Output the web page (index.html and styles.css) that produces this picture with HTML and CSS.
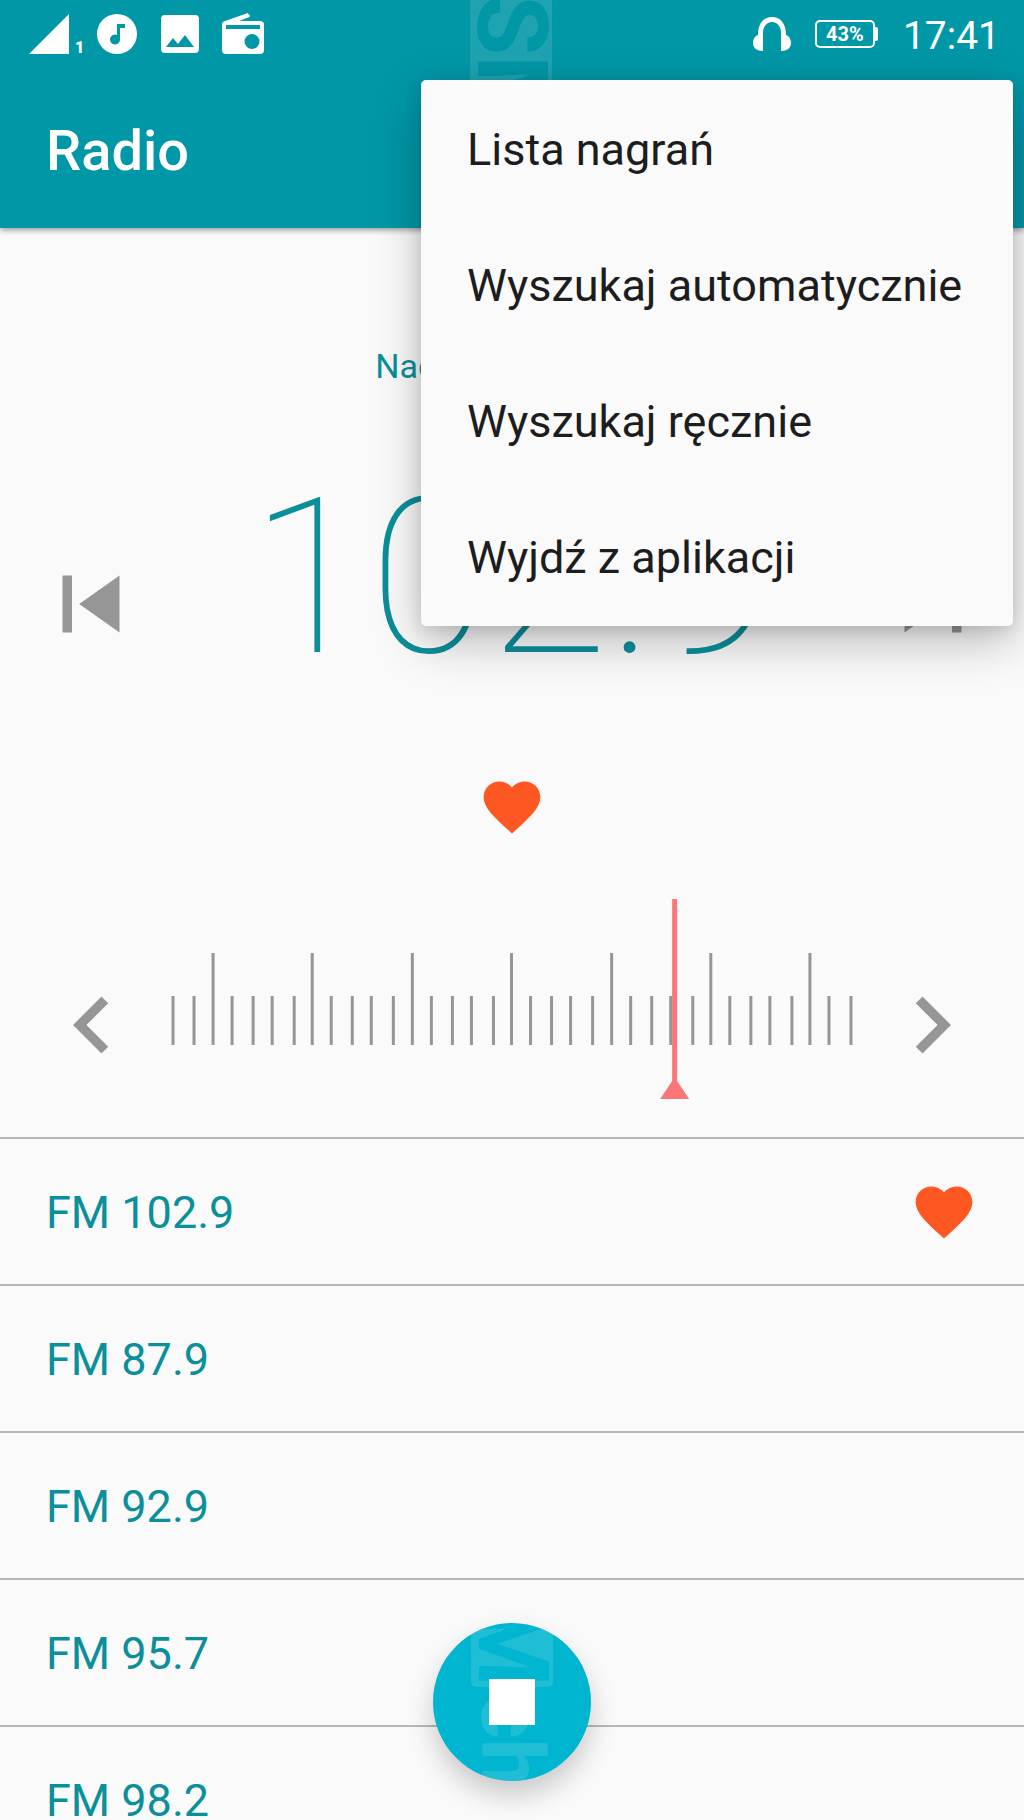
FILE: index.html
```
<!DOCTYPE html>
<html lang="pl">

<head>
  <meta charset="UTF-8" />
  <meta name="viewport" content="width=device-width, initial-scale=1.0" />
  <title>Radio</title>
  <link rel="stylesheet" href="styles.css">
</head>

<body>
  <div class="app">
    <header class="header">
      <div class="stamp stamp-top" aria-hidden="true">SM</div>
      <div class="status-bar">
        <div class="status-left">
          <svg class="signal" width="40" height="40" viewBox="0 0 40 40"><path d="M0 40L40 0v40z" /></svg>
          <span class="sim">1</span>
          <svg class="music" width="40" height="40" viewBox="0 0 40 40">
            <path fill-rule="evenodd" d="M20 0a20 20 0 1 0 0 40a20 20 0 1 0 0-40zM20 10h8v4h-5v11.500a5 5 0 1 1-3-4.600z" />
          </svg>
          <svg class="photo" width="38" height="38" viewBox="0 0 38 38">
            <path fill-rule="evenodd" d="M4 0h30a4 4 0 0 1 4 4v30a4 4 0 0 1-4 4H4a4 4 0 0 1-4-4V4a4 4 0 0 1 4-4zM5 32h28l-9-12-7 9-5-6z" />
          </svg>
          <svg class="fm" width="42" height="42" viewBox="0 0 42 42">
            <path fill-rule="evenodd" d="M26 1a2 2 0 0 1 1.500 3L17 8h21a4 4 0 0 1 4 4v25a4 4 0 0 1-4 4H4a4 4 0 0 1-4-4V12a4 4 0 0 1 3-4L26 0zM4 12v4h34v-4zM30 21a7.500 7.500 0 1 0 0 15a7.500 7.500 0 1 0 0-15z" />
          </svg>
        </div>
        <div class="status-right">
          <svg class="headphones" width="38" height="34" viewBox="0 0 38 34">
            <path d="M0 26c0-4 2-7 5-8C5 7 10 0 19 0s14 7 14 18c3 1 5 4 5 8 0 5-4 8-10 8V16c0-7-4-11-9-11s-9 4-9 11v18C4 34 0 31 0 26z" />
          </svg>
          <span class="battery">43%</span>
          <time>17:41</time>
        </div>
      </div>
      <h1 class="title">Radio</h1>
      <nav class="menu">
        <button type="button">Lista nagrań</button>
        <button type="button">Wyszukaj automatycznie</button>
        <button type="button">Wyszukaj ręcznie</button>
        <button type="button">Wyjdź z aplikacji</button>
      </nav>
    </header>

    <main class="player">
      <p class="state">Nadawanie fal FM</p>
      <div class="station">
        <button type="button" class="icon-btn" aria-label="Poprzednia stacja">
          <svg width="114" height="114" viewBox="0 0 24 24"><path d="M6 6h2v12H6zm3.500 6l8.500 6V6z" /></svg>
        </button>
        <span class="frequency">102.9</span>
        <button type="button" class="icon-btn" aria-label="Następna stacja">
          <svg width="114" height="114" viewBox="0 0 24 24"><path d="M6 18l8.500-6L6 6v12zM16 6v12h2V6z" /></svg>
        </button>
      </div>
      <button type="button" class="icon-btn heart favorite" aria-label="Ulubiona">
        <svg width="68" height="68" viewBox="0 0 24 24"><path d="M12 21.350l-1.450-1.320C5.400 15.360 2 12.280 2 8.500 2 5.420 4.420 3 7.500 3c1.740 0 3.410.810 4.500 2.090C13.090 3.810 14.760 3 16.500 3 19.580 3 22 5.420 22 8.500c0 3.780-3.400 6.860-8.550 11.540z" /></svg>
      </button>
      <div class="tuner">
        <button type="button" class="icon-btn step" aria-label="W dół">
          <svg width="114" height="114" viewBox="0 0 24 24"><path d="M15.410 7.410L14 6l-6 6 6 6 1.410-1.410L10.830 12z" /></svg>
        </button>
        <div class="scale">
          <svg class="ticks" viewBox="0 0 681 92" preserveAspectRatio="none">
            <!-- long ticks -->
            <path d="M42 0v92M141 0v92M241 0v92M340 0v92M440 0v92M539 0v92M638 0v92" />
            <!-- short ticks -->
            <path d="M2 43v49M23 43v49M61 43v49M82 43v49M101 43v49M123 43v49M160 43v49M181 43v49M200 43v49M222 43v49M260 43v49M281 43v49M300 43v49M322 43v49M359 43v49M380 43v49M399 43v49M421 43v49M459 43v49M480 43v49M499 43v49M521 43v49M558 43v49M579 43v49M598 43v49M620 43v49M657 43v49M679 43v49" />
          </svg>
          <input type="range" class="needle" min="87" max="108.5" step="0.1" value="102.9" aria-label="Częstotliwość">
        </div>
        <button type="button" class="icon-btn step" aria-label="W górę">
          <svg width="114" height="114" viewBox="0 0 24 24"><path d="M10 6L8.590 7.410 13.170 12l-4.580 4.590L10 18l6-6z" /></svg>
        </button>
      </div>
    </main>

    <ul class="stations">
      <li>
        <a href="#">FM 102.9</a>
        <button type="button" class="icon-btn heart" aria-label="Ulubiona">
          <svg width="68" height="68" viewBox="0 0 24 24"><path d="M12 21.350l-1.450-1.320C5.400 15.360 2 12.280 2 8.500 2 5.420 4.420 3 7.500 3c1.740 0 3.410.810 4.500 2.090C13.090 3.810 14.760 3 16.500 3 19.580 3 22 5.420 22 8.500c0 3.780-3.400 6.860-8.550 11.540z" /></svg>
        </button>
      </li>
      <li><a href="#">FM 87.9</a></li>
      <li><a href="#">FM 92.9</a></li>
      <li><a href="#">FM 95.7</a></li>
      <li><a href="#">FM 98.2</a></li>
    </ul>

    <button type="button" class="stop" aria-label="Stop">
      <span class="stop-stamp" aria-hidden="true"><span class="stamp stamp-box">M</span>ch</span>
      <svg width="46" height="46" viewBox="0 0 46 46"><path d="M0 0h46v46H0z" /></svg>
    </button>
  </div>
</body>

</html>
```
FILE: styles.css
```
* {
  box-sizing: border-box;
}

body {
  margin: 0;
  background-color: #fafafa;
  color: #0b8f9b;
  font-family: Roboto, "Noto Sans", sans-serif;
}

button {
  margin: 0;
  padding: 0;
  border: 0;
  background: none;
  font: inherit;
  cursor: pointer;
}

svg {
  display: block;
  fill: currentColor;
}

.app {
  position: relative;
  display: flex;
  flex-direction: column;
  height: 100vh;
  overflow: hidden;
}

/* Header */
.header {
  position: relative;
  z-index: 1;
  height: 228px;
  flex: none;
  background-color: #0097a7;
  color: #fff;
  box-shadow: 0 2px 6px rgba(0, 0, 0, 0.4);
}

.status-bar {
  display: flex;
  justify-content: space-between;
  height: 68px;
  padding: 0 24px 0 29px;
}

.status-left,
.status-right {
  display: flex;
  align-items: center;
}

.sim {
  align-self: flex-end;
  width: 10px;
  margin: 0 12px 10px 6px;
  font-size: 16px;
  font-weight: 900;
  line-height: 20px;
}

.music {
  margin-right: 24px;
}

.photo {
  margin-right: 23px;
}

.battery {
  position: relative;
  width: 60px;
  height: 28px;
  margin: 0 28px 0 24px;
  border: 2px solid #fff;
  border-radius: 5px;
  font-size: 20px;
  font-weight: 700;
  line-height: 25px;
  text-align: center;
}

.battery::after {
  content: "";
  position: absolute;
  top: 5px;
  right: -5px;
  width: 4px;
  height: 14px;
  border-radius: 0 2px 2px 0;
  background-color: #fff;
}

.status-right time {
  padding-top: 3px;
  font-size: 39px;
  line-height: 44px;
}

.title {
  margin: 0;
  padding: 0 46px;
  font-size: 56px;
  font-weight: 500;
  line-height: 166px;
}

.menu {
  position: absolute;
  top: 80px;
  right: 11px;
  display: flex;
  flex-direction: column;
  width: 592px;
  padding: 2px 0 0;
  border-radius: 5px;
  background-color: #fafafa;
  box-shadow: 0 16px 48px rgba(0, 0, 0, 0.25), 0 4px 16px rgba(0, 0, 0, 0.12);
}

.menu button {
  padding: 0 46px;
  color: #1d1d1d;
  font-size: 45px;
  line-height: 136px;
  text-align: left;
}

/* Vertical letters in a pale frame */
.stamp {
  width: 82px;
  background-color: rgba(255, 255, 255, 0.12);
  font-size: 98px;
  font-weight: 700;
  line-height: 82px;
  writing-mode: vertical-rl;
}

.stamp-top {
  position: absolute;
  top: 0;
  left: calc(50% - 42px);
  height: 80px;
  overflow: hidden;
  color: #0097a7;
  text-indent: -5px;
}

/* Player */
.player {
  padding: 118px 34px 38px;
}

.state {
  margin: 0;
  font-size: 34px;
  line-height: 40px;
  text-align: center;
}

.icon-btn {
  color: #969696;
}

.station {
  display: flex;
  align-items: flex-end;
  justify-content: space-between;
  margin-top: 109px;
}

.frequency {
  font-size: 218px;
  font-weight: 100;
  line-height: 166px;
}

.heart {
  color: #ff5722;
}

.favorite {
  display: block;
  margin: 112px auto 58px;
}

.tuner {
  display: flex;
  align-items: flex-end;
  padding: 0 1px;
}

.step {
  margin-bottom: 17px;
}

.scale {
  display: grid;
  flex: 1;
  margin: 0 9px;
}

.ticks,
.needle {
  grid-area: 1 / 1;
}

.ticks {
  width: calc(100% - 26px);
  height: 92px;
  margin: 54px 13px 0;
  fill: none;
  stroke: #969696;
  stroke-width: 3;
}

.needle {
  width: 100%;
  height: 200px;
  margin: 0;
  background: none;
  -webkit-appearance: none;
  appearance: none;
}

.needle::-webkit-slider-thumb {
  width: 29px;
  height: 200px;
  background-color: #fb7678;
  clip-path: polygon(12px 0, 17px 0, 17px 182px, 29px 200px, 0 200px, 12px 182px);
  -webkit-appearance: none;
}

/* Station list */
.stations {
  flex: 1;
  margin: 0;
  padding: 0;
  overflow: hidden;
  list-style: none;
}

.stations li {
  display: flex;
  align-items: center;
  justify-content: space-between;
  height: 147px;
  padding: 0 46px;
  border-top: 2px solid #b8b8b8;
}

.stations a {
  padding-top: 3px;
  color: inherit;
  font-size: 45px;
  line-height: 56px;
  text-decoration: none;
}

/* Stop button */
.stop {
  position: absolute;
  bottom: 39px;
  left: calc(50% - 79px);
  display: grid;
  place-items: center;
  width: 158px;
  height: 158px;
  border-radius: 50%;
  background-color: #00b5cf;
  color: #fff;
  box-shadow: 0 14px 28px rgba(0, 0, 0, 0.2);
}

.stop svg,
.stop-stamp {
  grid-area: 1 / 1;
}

.stop svg {
  position: relative;
}

.stop-stamp {
  display: flex;
  width: 158px;
  height: 158px;
  padding: 6px 38px 0;
  border-radius: 50%;
  overflow: hidden;
  color: rgba(255, 255, 255, 0.12);
  font-size: 88px;
  font-weight: 700;
  line-height: 82px;
  writing-mode: vertical-rl;
}

.stamp-box {
  display: flex;
  flex: none;
  justify-content: flex-end;
  height: 58px;
  margin-bottom: 6px;
  border-radius: 5px;
  overflow: hidden;
  color: #00b5cf;
}
```
